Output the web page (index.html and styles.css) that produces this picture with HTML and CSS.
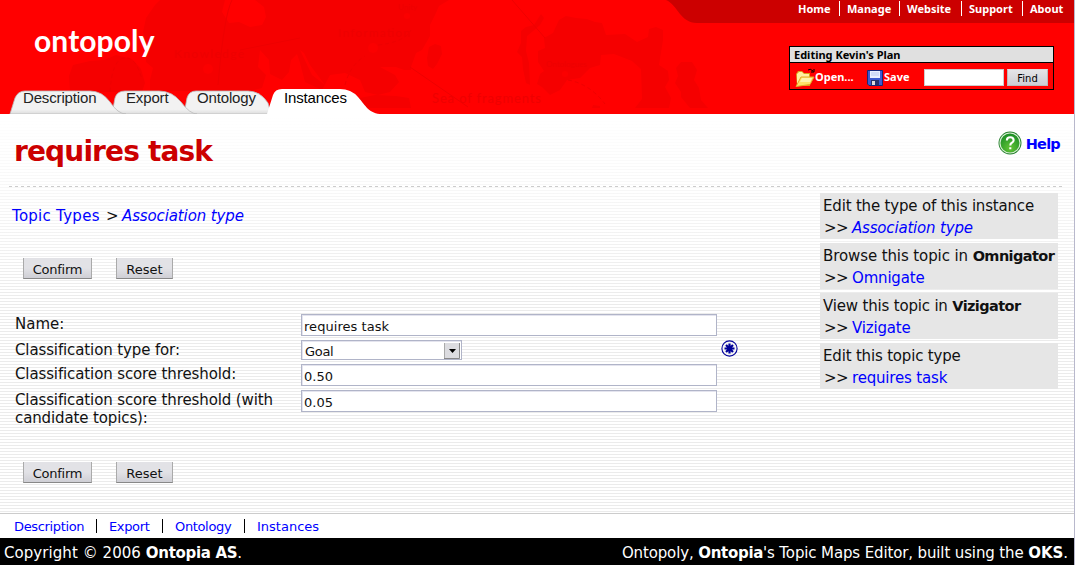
FILE: index.html
```html
<!DOCTYPE html>
<html lang="en">
<head>
<meta charset="utf-8">
<title>Ontopoly - requires task</title>
<link rel="stylesheet" href="styles.css">
</head>
<body>
<div class="page">
  <header class="header">
    <svg class="header-art" width="1074" height="114" viewBox="0 0 1074 114" aria-hidden="true">
      <g fill="#f50000">
        <path d="M160 0H225L222 12L229 23L239 22L250 27L262 25L266 17L264 7L255 0H449L439 6L435 15L430 25V36L422 50L416 53L411 67V70L404 70L396 67L380 67L395 75L399 82L390 92L378 95L365 92L360 80L345 73L330 75L322 90L305 82L300 63L297 54L291 60L289 72L282 80L270 74L269 60L260 50L258 67L266 75L262 88L250 91H150V80L153 68L146 62L147 45L143 32L146 18L155 5Z"/>
        <path d="M90 61L104 60L116 55L132 59L141 69L145 83L142 92H70L69 76L73 65Z"/>
        <path d="M360 98L375 95L396 96L409 98L411 108H350Z"/>
        <path d="M435 44L441 46L442 54L437 64L433 69L428 66L427 58L429 47Z"/>
        <path d="M541 14L544 18L540 25L533 31L527 36L526 51L529 63L530 85L526 83L523 69L522 57L517 52L521 43V31L526 27L534 25Z"/>
        <path d="M553 33L559 20L566 16L576 18L587 19L595 22L602 23L606 35L625 34L637 42L648 37L649 29L656 27L663 30V40L659 65L668 71L669 80L665 87L671 98L669 108H635L642 99L641 69L632 61L614 54L601 55L600 65L590 68L580 78L567 80L560 90L550 95L542 87L537 84L540 74L544 71L538 62V51L545 48L544 38Z"/>
        <path d="M681 62L692 62L697 70L694 80L699 88L701 100L708 108H690L681 97L681 92L675 83L678 76L676 68Z"/>
        <path d="M593 105L600 106V108H592Z"/>
      </g>
      <path d="M300 50L312 75L325 85L310 65L304 53Z" fill="#f00"/>
      <g fill="none" stroke="#ee0000">
        <path d="M512 0L545 38M410 67L468 107M218 85Q224 15 232 0M240 50L300 38"/>
        <path stroke-dasharray="4 3" d="M110 92Q112 60 124 58T142 80M378 45Q405 42 411 30M568 80Q590 84 605 104M345 85Q350 65 365 56"/>
      </g>
      <g fill="#ee0000" class="art-label">
        <text x="174" y="58" textLength="70">Knowledge</text>
        <text x="338" y="37" textLength="72">Information</text>
        <text x="398" y="10" font-size="8">Unity</text>
        <text x="546" y="67" font-size="8">Ontologues</text>
        <text x="432" y="103" textLength="109" font-size="13">Sea of fragments</text>
      </g>
      <g fill="#fb0000"><circle cx="208" cy="69" r="5"/><circle cx="373" cy="48" r="5"/><circle cx="407" cy="16" r="3"/><circle cx="565" cy="74" r="3"/></g>
      <path d="M666 0C678 5 680 23 697 23H1074V0Z" fill="#c00"/>
      <defs><linearGradient id="tab" x1="0" y1="0" x2="0" y2="1"><stop offset="0" stop-color="#f2f2f2"/><stop offset=".8" stop-color="#f2f2f2"/><stop offset="1" stop-color="#ddd"/></linearGradient></defs>
      <g fill="url(#tab)" stroke="#bbb" stroke-width=".8">
        <path d="M184 114L187 98Q189 91 196 91H248Q260 91 268 103L271 114Z"/>
        <path d="M112 114L115 98Q117 91 125 91H159Q172 91 181 102Q190 114 197 114Z"/>
        <path d="M10 114L15 98Q18 91 25 91H90Q102 91 110 102Q118 114 126 114Z"/>
      </g>
      <path d="M267 114L273 95Q275 89 282 89H340Q351 89 358 97C366 106 369 114 382 114Z" fill="#fff"/>
    </svg>
    <div class="header-left">
      <div class="logo">ontopoly</div>
      <nav class="tabs">
        <a class="t1">Description</a><a class="t2">Export</a><a class="t3">Ontology</a><a class="t4">Instances</a>
      </nav>
    </div>
    <div class="header-right">
      <nav class="topnav"><a class="n1">Home</a><a class="n2">Manage</a><a class="n3">Website</a><a class="n4">Support</a><a class="n5">About</a></nav>
      <section class="editbox">
        <div class="edit-title"><span>Editing Kevin's Plan</span></div>
        <div class="edit-tools">
          <svg class="folder" width="20" height="20" viewBox="0 0 20 20">
            <path d="M1 6L3 3H7L9 5H15V18H2Z" fill="#d9a01c"/><path d="M2 6L4 4H7L9 6H14V9H6L2 17Z" fill="#fff0a0"/><path d="M1 18.500L6 9H19L15 16.500Z" fill="#ffe36a" stroke="#e3a92b"/><path d="M7 10H17L15 14H5Z" fill="#fff5ae"/><path d="M13 2Q15 0 18 3M19 1V4H16" fill="none" stroke="#000"/>
          </svg>
          <span class="open">Open...</span>
          <svg class="disk" width="16" height="16" viewBox="0 0 16 16">
            <path d="M.5 .5H15.5V15.5H2L.5 14Z" fill="#3c5cd0" stroke="#172878"/><path d="M3 1H13V8H3Z" fill="#e8f0ff"/><path d="M4 3H12M4 5H12" stroke="#b9c9ef"/><path d="M4 10H12V15H4Z" fill="#26336c"/><path d="M5 11H8V15H5Z" fill="#ddd"/>
          </svg>
          <span class="save">Save</span>
          <input class="find-input" type="text">
          <button class="find-btn"><span>Find</span></button>
        </div>
      </section>
    </div>
  </header>

  <main class="main">
    <div class="title-row">
      <h1>requires task</h1>
      <a class="help">
        <svg width="24" height="24" viewBox="0 0 23 23">
          <defs><radialGradient id="hg" cx=".5" cy=".75" r=".75"><stop offset="0" stop-color="#62c434"/><stop offset="1" stop-color="#168b25"/></radialGradient></defs>
          <circle cx="11.5" cy="11.5" r="11" fill="#237f2b"/><circle cx="11.5" cy="11.5" r="9.6" fill="url(#hg)" stroke="#d9efd4" stroke-width="1.1"/>
          <path d="M8.500 9Q8.500 6 11.700 6T15 8.800Q15 10.500 13 11.500Q11.800 12.200 11.800 13.800M11.800 15.500V17.500" fill="none" stroke="#fff" stroke-width="2"/>
        </svg><span>Help</span></a>
    </div>
    <svg class="rule" width="1055" height="1"><path d="M0 .5H1055" stroke="#ccc" stroke-dasharray="3 3"/></svg>
    <div class="columns">
      <div class="content">
        <div class="crumbs"><a class="c1">Topic Types</a><span class="c2">&gt;</span><a class="c3"><i>Association type</i></a></div>
        <div class="actions"><button class="btn confirm"><span>Confirm</span></button><button class="btn reset"><span>Reset</span></button></div>
        <div class="form">
          <label class="l1"><span>Name:</span></label><input class="field" value="requires task">
          <label class="l2"><span>Classification type for:</span></label>
          <div class="select-row"><div class="select"><span>Goal</span><svg width="16" height="16" viewBox="0 0 16 16"><path d="M0 0H16V16H0Z" fill="#dcdce0"/><path d="M.5 0V15.500" stroke="#aaa"/><path d="M0 15.500H15.500V0" fill="none" stroke="#888"/><path d="M5 6H12L8.500 10Z"/></svg></div>
            <svg width="17" height="17" viewBox="0 0 17 17"><circle cx="8.500" cy="8.500" r="7.600" fill="#f4f4f4" stroke="#009" stroke-width="1.100"/><path d="M8.500 3.500V13.500M3.500 8.500H13.500M5 5L12 12M12 5L5 12" stroke="#009" stroke-width="2.200"/></svg></div>
          <label class="l3"><span>Classification score threshold:</span></label><input class="field" value="0.50">
          <label class="l4"><span>Classification score threshold (with</span><br><span class="l5">candidate topics):</span></label><input class="field" value="0.05">
        </div>
        <div class="actions lower"><button class="btn confirm"><span>Confirm</span></button><button class="btn reset"><span>Reset</span></button></div>
      </div>
      <aside class="side">
        <div><p><span class="s1">Edit the type of this instance</span></p><p><span class="arrow">&gt;&gt;</span><a><i class="s2">Association type</i></a></p></div>
        <div><p><span class="s3">Browse this topic in <b>Omnigator</b></span></p><p><span class="arrow">&gt;&gt;</span><a class="s4">Omnigate</a></p></div>
        <div><p><span class="s5">View this topic in <b>Vizigator</b></span></p><p><span class="arrow">&gt;&gt;</span><a class="s6">Vizigate</a></p></div>
        <div><p><span class="s7">Edit this topic type</span></p><p><span class="arrow">&gt;&gt;</span><a class="s8">requires task</a></p></div>
      </aside>
    </div>
  </main>
  <nav class="footnav"><a class="f1">Description</a><a class="f2">Export</a><a class="f3">Ontology</a><a class="f4">Instances</a></nav>
  <footer class="footer"><span class="copy">Copyright © 2006 <b>Ontopia AS</b>.</span><span class="built">Ontopoly, <b>Ontopia</b>'s Topic Maps Editor, built using the <b class="oks">OKS</b>.</span></footer>
</div>
</body>
</html>
```
FILE: styles.css
```css
* { box-sizing: border-box; }
body { margin: 0; background: #fff; font: 15px/18px "DejaVu Sans", sans-serif; color: #111; }
.page { width: 1075px; height: 565px; border-right: 1px solid #b8b8cc; overflow: hidden; white-space: nowrap; display: flex; flex-direction: column; }
a { color: #00f; }
h1, p { margin: 0; }
button { font: 13px/16px "DejaVu Sans", sans-serif; padding: 0; }

.header { position: relative; height: 114px; background: #f00; display: flex; justify-content: space-between; flex: none; }
.header-art { position: absolute; left: 0; top: 0; }
.art-label { font-family: Lato, sans-serif; font-size: 12px; }
.header-left, .header-right { position: relative; }
.logo { margin: 20px 0 0 34px; height: 69px; font: bold 30px/40px Lato, sans-serif; letter-spacing: .1px; color: #fff; }
.tabs { display: flex; padding-left: 23px; font: 15px/18px "Liberation Sans", sans-serif; letter-spacing: -.15px; }
.tabs a { color: #222; }
.t1 { width: 103px; }
.t2 { width: 71px; }
.t3 { width: 87px; }
.tabs .t4 { color: #000; }

.header-right { width: 285px; }
.topnav { display: flex; height: 46px; margin-left: 9px; padding-top: 1px; }
.topnav a { height: 15px; font: bold 11px/16px "Noto Sans", sans-serif; color: #fff; padding-left: 7px; border-right: 1px solid #fff; flex: none; }
.topnav .n1 { width: 42px; padding-left: 0; }
.n2 { width: 60px; }
.n3 { width: 62px; }
.n4 { width: 61px; }
.topnav .n5 { border: 0; }
.editbox { width: 265px; height: 44px; border: 1px solid #000; background: #f00; }
.edit-title { height: 16px; background: #e0e0e0; border-bottom: 1px solid #000; padding-left: 4px; font: bold 11px/15px "Noto Sans", sans-serif; color: #000; }
.edit-tools { display: flex; padding-left: 5px; color: #fff; font: bold 11px/28px "Noto Sans", sans-serif; }
.folder { margin-top: 5px; }
.open { width: 52px; }
.disk { margin-top: 7px; }
.save { width: 41px; padding-left: 1px; }
.find-input { width: 80px; height: 17px; margin-top: 6px; border: 1px solid #ccc; background: #fff; padding: 0; }
.find-btn { width: 41px; height: 17px; margin: 6px 0 0 3px; border: 1px solid #bbb; border-top-color: #ddd; background: linear-gradient(#e4e4e8, #ceced4); font-size: 10px; line-height: 16px; padding-top: 1px; }

.main { height: 399px; padding: 0 0 0 9px; background: linear-gradient(#fff, rgba(255,255,255,0) 190px), repeating-linear-gradient(#fff 0 1px, #ebebeb 1px 2px, #fff 2px 3px); flex: none; }
.title-row { display: flex; justify-content: space-between; height: 72px; padding: 18px 14px 0 5px; }
h1 { font: bold 28px/40px "DejaVu Sans", sans-serif; letter-spacing: -.85px; color: #c00; }
.help { display: flex; gap: 4px; font-weight: bold; font-size: 14.5px; line-height: 25px; letter-spacing: -.75px; }
.help svg { margin-top: -1px; }
.rule { display: block; }
.columns { display: flex; }
.content { width: 811px; }
.crumbs { display: flex; padding: 20px 0 0 3px; }
.c1 { width: 94px; letter-spacing: .27px; }
.c2 { width: 16px; }
.c3 { letter-spacing: -.12px; }
.actions { display: flex; margin: 33px 0 0 14px; }
.btn { height: 21px; border: 1px solid #aaa; border-top: 0; border-bottom-color: #888; background: linear-gradient(#e2e2e6 50%, #cfcfd5); color: #111; padding-top: 3px; }
.confirm { width: 69px; margin-right: 24px; letter-spacing: -.25px; }
.reset { width: 57px; }
.form { display: grid; grid-template-columns: 286px 428px; grid-template-rows: 26px 24px 26px 36px; margin: 35px 0 0 6px; }
.form label { padding-top: 1px; }
.l2, .l3, .l4 { letter-spacing: -.12px; }
.field { width: 416px; height: 22px; border: 1px solid #b0b4c8; box-shadow: inset 1px 1px #e4e4ee; padding: 3px 0 0 2px; font: 13px "DejaVu Sans", sans-serif; letter-spacing: .05px; color: #111; background: #fff; }
.select-row { display: flex; width: 437px; justify-content: space-between; }
.select { display: flex; justify-content: space-between; width: 161px; height: 20px; border: 1px solid #b0b4c8; box-shadow: inset 1px 1px #e4e4ee; background: #fff; padding: 2px 1px 0 3px; font-size: 13px; line-height: 17px; letter-spacing: -.3px; }
.lower { margin-top: 36px; }

.side { width: 238px; padding-top: 6px; display: flex; flex-direction: column; gap: 4px; }
.side div { height: 46px; background: #e6e6e6; padding: 2px 0 0 3px; }
.side p { height: 22px; line-height: 22px; display: flex; letter-spacing: -.18px; }
.side .s3 { letter-spacing: -.1px; }
.side b { font-size: 14.5px; letter-spacing: -.6px; }
.side .arrow { width: 29px; padding-left: 1px; letter-spacing: -.5px; }

.footnav { height: 25px; border-top: 1px solid #ccc; padding: 5px 0 0 14px; display: flex; background: #fff; font-size: 13px; line-height: 16px; flex: none; }
.footnav a { height: 14px; border-right: 1px solid #000; margin-right: 12px; letter-spacing: -.35px; }
.footnav a:last-child { border: 0; letter-spacing: 0; }
.f1 { width: 83px; }
.f2 { width: 54px; }
.f3 { width: 70px; }
.footnav .f2 { margin-right: 12px; }
.footer { height: 27px; background: #000; color: #fff; display: flex; justify-content: space-between; padding: 6px 6px 0 4px; flex: none; }
.copy { letter-spacing: .06px; }
.built { letter-spacing: -.13px; }
.footer b { letter-spacing: -.3px; }
.footer .oks { letter-spacing: 0; }
```
